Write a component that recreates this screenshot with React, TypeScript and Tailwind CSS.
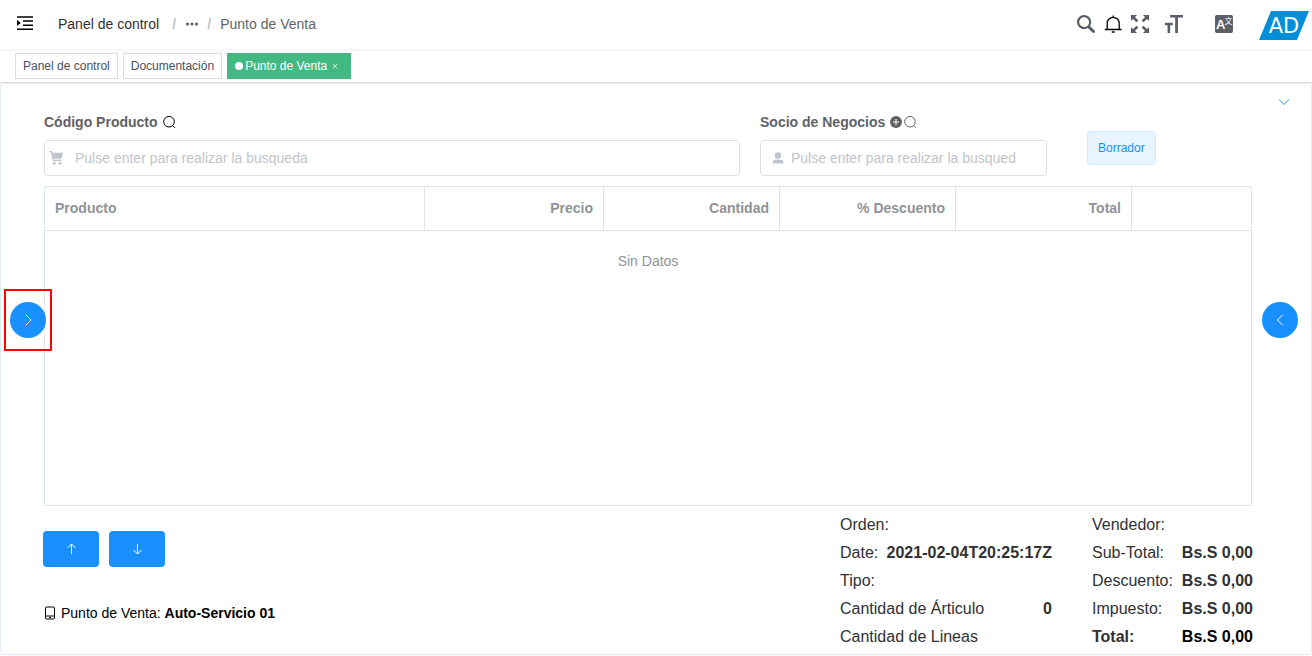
import { useState } from 'react';
import type { ReactNode } from 'react';

interface Column {
  label: string;
  width: string;
  align: string;
}

interface TotalLine {
  label: string;
  value?: string;
  strong?: boolean;
}

const columns: Column[] = [
  { label: 'Producto', width: 'w-[380px]', align: 'text-left' },
  { label: 'Precio', width: 'w-[179px]', align: 'text-right' },
  { label: 'Cantidad', width: 'w-[176px]', align: 'text-right' },
  { label: '% Descuento', width: 'w-[176px]', align: 'text-right' },
  { label: 'Total', width: 'w-[176px]', align: 'text-right' },
  { label: '', width: 'w-[119px]', align: 'text-right' },
];

const orderInfo: TotalLine[] = [
  { label: 'Orden:' },
  { label: 'Date:', value: '2021-02-04T20:25:17Z' },
  { label: 'Tipo:' },
  { label: 'Cantidad de Árticulo', value: '0' },
  { label: 'Cantidad de Lineas' },
];

const totals: TotalLine[] = [
  { label: 'Vendedor:' },
  { label: 'Sub-Total:', value: 'Bs.S 0,00' },
  { label: 'Descuento:', value: 'Bs.S 0,00' },
  { label: 'Impuesto:', value: 'Bs.S 0,00' },
  { label: 'Total:', value: 'Bs.S 0,00', strong: true },
];

/** Thin line icon on a 14x14 grid */
function LineIcon({ className, children }: { className: string; children: ReactNode }) {
  return (
    <svg viewBox="0 0 14 14" className={className} fill="none" stroke="currentColor" strokeWidth="1" aria-hidden="true">
      {children}
    </svg>
  );
}

function SearchThin({ className }: { className: string }) {
  return (
    <LineIcon className={className}>
      <circle cx="7" cy="6.7" r="5.3" />
      <path d="M10.8 10.600l2.200 2.200" />
    </LineIcon>
  );
}

function HeaderIcons() {
  return (
    <div className="flex items-center text-[#5a5e66]">
      <button type="button" aria-label="Buscar" className="mr-2">
        <svg viewBox="0 0 128 128" className="size-[18px]" fill="currentColor">
          <path d="M124.884 109.812L94.256 79.166c-.357-.357-.757-.629-1.129-.914a50.366 50.366 0 0 0 8.186-27.59C101.327 22.689 78.656 0 50.67 0 22.685 0 0 22.688 0 50.663c0 27.989 22.685 50.663 50.656 50.663 10.186 0 19.643-3.03 27.6-8.201.286.385.557.771.9 1.114l30.628 30.632a10.633 10.633 0 0 0 7.543 3.129c2.728 0 5.457-1.043 7.543-3.115 4.171-4.157 4.171-10.915.014-15.073M50.671 85.338C31.557 85.338 16 69.78 16 50.663c0-19.102 15.557-34.661 34.67-34.661 19.115 0 34.657 15.559 34.657 34.675 0 19.102-15.557 34.661-34.656 34.661" />
        </svg>
      </button>
      <button type="button" aria-label="Notificaciones" className="mr-2 text-black">
        <svg viewBox="0 0 20 20" className="size-5" fill="none" stroke="currentColor" strokeWidth="1.3">
          <path d="M4.2 15.5V9.300a6 6 0 0 1 12 0v6.200M1.800 15.500h16.800M10.200 1.500v1.800M8.800 18h2.800" />
        </svg>
      </button>
      <button type="button" aria-label="Pantalla completa" className="mr-4">
        <svg viewBox="0 0 128 128" className="size-[18px]" fill="currentColor">
          <path d="M38.47 52L52 38.462l-23.648-23.67L43.209 0H.035L0 43.137l14.757-14.865L38.47 52zm74.773 47.726L89.526 76 76 89.536l23.648 23.672L84.795 128h43.174L128 84.863l-14.757 14.863zM89.538 52l23.668-23.648L128 43.207V.038L84.866 0 99.73 14.76 76 38.472 89.538 52zM38.46 76L14.792 99.651 0 84.794v43.173l43.137.033-14.865-14.757L52 89.53 38.46 76z" />
        </svg>
      </button>
      <button type="button" aria-label="Tamaño" className="mr-8">
        <svg viewBox="0 0 128 128" className="size-[18px]" fill="currentColor">
          <path d="M0 54.857h54.796v18.286H36.531V128H18.265V73.143H0V54.857zm127.857-36.571H91.935V128H72.456V18.286H36.534V0h91.326l-.003 18.286z" />
        </svg>
      </button>
      <button type="button" aria-label="Idioma" className="mr-[26px]">
        <svg viewBox="0 0 18 18" className="size-[18px]">
          <rect width="18" height="18" rx="2" fill="#5a5e66" />
          <text x="1" y="14" fontSize="13" fontWeight="700" fill="#fff" className="font-['Liberation_Sans',sans-serif]">A</text>
          <text x="9.500" y="9" fontSize="8" fill="#fff" className="font-['Noto_Sans_CJK_SC',sans-serif]">文</text>
        </svg>
      </button>
      <a href="#perfil" aria-label="Perfil">
        <svg viewBox="0 0 52 32" className="h-8 w-[52px]">
          <path d="M12 3h38L38 32H0z" fill="#008fd8" />
          <text x="25" y="25" fontSize="21" fill="#fff" textAnchor="middle" className="font-['DejaVu_Sans',sans-serif]">AD</text>
        </svg>
      </a>
    </div>
  );
}

function Navbar() {
  return (
    <header className="relative flex h-[49px] items-center justify-between bg-white pr-px pb-px pl-4 shadow-[0_1px_4px_rgba(0,21,41,0.08)]">
      <div className="flex items-center">
        <button type="button" aria-label="Menú" className="mr-6">
          <svg viewBox="0 0 18 16" className="h-4 w-[18px]" fill="currentColor">
            <path d="M1 .2h16v1.500H1zM7 4.200h10v1.500H7zM7 8.400h10v1.500H7zM1 12.600h16v1.500H1zM1 4l3.800 3L1 10z" />
          </svg>
        </button>
        <nav className="flex items-center text-sm">
          <a href="#panel" className="text-[#303133]">Panel de control</a>
          <span className="ml-[13px] w-[13px] font-bold text-[#c0c4cc]">/</span>
          <button type="button" aria-label="Más rutas" className="text-[#606266]">
            <svg viewBox="0 0 14 14" className="size-[14px]" fill="currentColor">
              <circle cx="2.4" cy="7" r="1.6" />
              <circle cx="7" cy="7" r="1.6" />
              <circle cx="11.6" cy="7" r="1.6" />
            </svg>
          </button>
          <span className="ml-2 w-[13px] font-bold text-[#c0c4cc]">/</span>
          <span className="text-[#606266]">Punto de Venta</span>
        </nav>
      </div>
      <HeaderIcons />
    </header>
  );
}

function TagsView() {
  return (
    <nav className="flex h-[34px] items-center gap-[5px] border-b border-[#d8dce5] bg-white px-[15px] text-xs text-[#495060]">
      <a href="#panel" className="flex h-[26px] items-center border border-[#d8dce5] px-[7px] pt-px">Panel de control</a>
      <a href="#doc" className="flex h-[26px] items-center border border-[#d8dce5] px-[7px] pt-px">Documentación</a>
      <a href="#pos" className="flex h-[26px] items-center border border-[#42b983] bg-[#42b983] px-[7px] pt-px text-white">
        <span className="mr-0.5 size-2 rounded-full bg-white" />
        Punto de Venta
        <svg viewBox="0 0 16 16" className="size-4" stroke="currentColor" strokeWidth="0.8" aria-hidden="true">
          <path d="M5.800 6l4.400 4.400M10.200 6l-4.400 4.400" />
        </svg>
      </a>
    </nav>
  );
}

function SearchForm() {
  const [product, setProduct] = useState('');
  const [partner, setPartner] = useState('');

  return (
    <form className="flex items-start pt-5" onSubmit={e => e.preventDefault()}>
      <div className="min-w-0 flex-[696]">
        <div className="flex h-9 items-center gap-1 text-sm font-bold text-[#606266]">
          <label htmlFor="product">Código Producto</label>
          <SearchThin className="size-[14px] text-black" />
        </div>
        <div className="relative">
          <input
            id="product"
            className="h-9 w-full rounded border border-[#dcdfe6] bg-white pr-4 pl-[30px] text-sm text-[#606266] placeholder:text-[#c0c4cc]"
            value={product}
            onChange={e => setProduct(e.target.value)}
            placeholder="Pulse enter para realizar la busqueda"
          />
          <svg viewBox="0 0 14 14" className="absolute top-[11px] left-[5px] size-[14px] text-[#c0c4cc]" fill="currentColor" aria-hidden="true">
            <path d="M0 0h2.700l.5 1.700H14l-1.500 6H4.600l.3 1.100h7.600v1.100H3.900L1.800 1.200H0z" />
            <circle cx="5.2" cy="12.3" r="1.5" />
            <circle cx="11" cy="12.3" r="1.5" />
          </svg>
        </div>
      </div>
      <div className="ml-5 min-w-0 flex-[287]">
        <div className="flex h-9 items-center text-sm font-bold text-[#606266]">
          <label htmlFor="partner" className="mr-1">Socio de Negocios</label>
          <button type="button" aria-label="Nuevo socio">
            <svg viewBox="0 0 14 14" className="size-[14px]">
              <circle cx="7" cy="7" r="6" fill="currentColor" />
              <path d="M7 4v6M4 7h6" stroke="#fff" />
            </svg>
          </button>
          <SearchThin className="size-[14px]" />
        </div>
        <div className="relative">
          <input
            id="partner"
            className="h-9 w-full rounded border border-[#dcdfe6] bg-white pr-[30px] pl-[30px] text-sm text-[#606266] placeholder:text-[#c0c4cc]"
            value={partner}
            onChange={e => setPartner(e.target.value)}
            placeholder="Pulse enter para realizar la busqueda"
          />
          <svg viewBox="0 0 14 14" className="absolute top-[11px] left-[11px] size-[14px] text-[#c0c4cc]" fill="currentColor" aria-hidden="true">
            <circle cx="7" cy="4.5" r="3.200" />
            <path d="M1.700 12.500V11C1.700 9.200 4 8.500 7 8.500s5.300.7 5.300 2.500v1.500z" />
          </svg>
        </div>
      </div>
      <div className="ml-10 w-[165px] pt-[27px]">
        <span className="inline-flex h-[34px] items-center rounded border border-[#d1e9ff] bg-[#e8f4ff] px-[10px] text-xs text-[#1890ff]">
          Borrador
        </span>
      </div>
    </form>
  );
}

function LinesTable() {
  return (
    <div className="mt-[10px] min-h-[320px] flex-1 border border-[#dfe6ec] text-sm text-[#909399]">
      <table className="w-full table-fixed border-separate border-spacing-0">
        <thead>
          <tr>
            {columns.map(c => (
              <th key={c.label} className={`${c.width} ${c.align} h-11 border-r border-b border-[#dfe6ec] px-[10px] pb-px font-bold last:border-r-0`}>
                {c.label}
              </th>
            ))}
          </tr>
        </thead>
        <tbody>
          <tr>
            <td colSpan={columns.length} className="h-[60px] text-center">Sin Datos</td>
          </tr>
        </tbody>
      </table>
    </div>
  );
}

function Lines({ lines, className }: { lines: TotalLine[]; className: string }) {
  return (
    <dl className={`${className} text-base leading-7 text-[#303133]`}>
      {lines.map(l => (
        <div key={l.label} className="flex justify-between">
          <dt className={l.strong ? 'font-bold' : ''}>{l.label}</dt>
          <dd className={l.strong ? 'font-bold text-black' : 'font-bold'}>{l.value}</dd>
        </div>
      ))}
    </dl>
  );
}

function Footer() {
  return (
    <footer className="-mx-px flex justify-between pt-1 pb-[3px]">
      <div className="pt-[21px] text-sm text-black">
        <div className="flex gap-[10px] text-white">
          <button type="button" aria-label="Subir" className="flex h-9 w-14 items-center justify-center rounded bg-[#1890ff]">
            <LineIcon className="size-[14px]">
              <path d="M7.500 12V2M3.500 6l4-4 4 4" />
            </LineIcon>
          </button>
          <button type="button" aria-label="Bajar" className="flex h-9 w-14 items-center justify-center rounded bg-[#1890ff]">
            <LineIcon className="size-[14px]">
              <path d="M7.500 2v10M3.500 8l4 4 4-4" />
            </LineIcon>
          </button>
        </div>
        <p className="mt-9 ml-px flex items-center">
          <LineIcon className="mr-[3px] size-[14px]">
            <rect x="1.500" y="1" width="9" height="12" rx="1" />
            <path d="M1.500 10h9M5 11.500h2" />
          </LineIcon>
          <span>Punto de Venta: <b>Auto-Servicio 01</b></span>
        </p>
      </div>
      <div className="flex gap-10 pt-px">
        <Lines lines={orderInfo} className="w-[212px]" />
        <Lines lines={totals} className="w-[161px]" />
      </div>
    </footer>
  );
}

export default function App() {
  return (
    <div className="flex min-h-screen flex-col bg-[#f9fafc] font-['Liberation_Sans',Arial,sans-serif]">
      <Navbar />
      <TagsView />
      <main className="relative mb-0.5 flex flex-1 flex-col rounded border border-[#e6ebf5] bg-white pr-[59px] pl-[43px]">
        <button type="button" aria-label="Mostrar opciones" className="absolute top-[11px] right-5 text-[#1890ff]">
          <LineIcon className="size-[14px]">
            <path d="M2 4.500l5 5 5-5" />
          </LineIcon>
        </button>
        <SearchForm />
        <LinesTable />
        <Footer />
        <div className="absolute top-[205px] left-[3px] flex h-[62px] w-12 items-center justify-center border-2 border-[#f00]">
          <button type="button" aria-label="Ver productos" className="flex size-9 items-center justify-center rounded-full bg-[#1890ff] text-white">
            <LineIcon className="size-[14px]">
              <path d="M5 2l5 5-5 5" />
            </LineIcon>
          </button>
        </div>
        <button
          type="button"
          aria-label="Ver órdenes"
          className="absolute top-[218px] right-[13px] flex size-9 items-center justify-center rounded-full bg-[#1890ff] text-white"
        >
          <LineIcon className="size-[14px]">
            <path d="M9.500 2l-5 5 5 5" />
          </LineIcon>
        </button>
      </main>
    </div>
  );
}
